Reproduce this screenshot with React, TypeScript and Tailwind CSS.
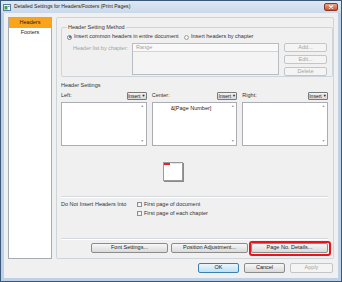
import React from "react";

type BtnProps = {
  children: React.ReactNode;
  className: string;
  disabled?: boolean;
  primary?: boolean;
};

const WinButton: React.FC<BtnProps> = ({ children, className, disabled = false, primary = false }) => {
  const tone = disabled
    ? "border-[#c3c6c9] bg-[#f4f4f4] text-[#a3a3a3]"
    : primary
    ? "border-[#3c7fb1] bg-gradient-to-b from-[#eaf6fd] to-[#bfe1f4] text-[#222]"
    : "border-[#8c8c8c] bg-gradient-to-b from-[#f7f7f7] to-[#dadada] text-[#222]";
  return (
    <div className={`flex items-center justify-center rounded-[2px] border text-[5.5px] leading-none ${tone} ${className}`}>
      {children}
    </div>
  );
};

const InsertButton: React.FC = () => (
  <div className="flex h-[8px] w-[20px] items-center justify-center gap-[1px] rounded-[1px] border border-[#7a7a7a] bg-gradient-to-b from-[#f4f4f4] to-[#d9d9d9] text-[5px] leading-none text-[#222]">
    <span>Insert</span>
    <span className="text-[4px]">▼</span>
  </div>
);

const TextBox: React.FC<{ text?: string }> = ({ text }) => (
  <div className="flex h-[44px] border border-[#abadb3] bg-white">
    <div className="flex flex-1 justify-center pt-[1px] text-[5.5px] leading-[8px] text-[#222]">{text}</div>
    <div className="flex w-[7px] flex-col items-center justify-between py-[1px] text-[3.5px] leading-[5px] text-[#9a9a9a]">
      <span>▲</span>
      <span>▼</span>
    </div>
  </div>
);

const Column: React.FC<{ label: string; text?: string }> = ({ label, text }) => (
  <div className="flex flex-col">
    <div className="flex h-[8px] items-center justify-between">
      <span className="text-[5.5px] leading-none">{label}</span>
      <InsertButton />
    </div>
    <div className="mt-[2px]">
      <TextBox text={text} />
    </div>
  </div>
);

const CheckRow: React.FC<{ label: string }> = ({ label }) => (
  <div className="flex h-[9px] items-center gap-[2px]">
    <div className="h-[5px] w-[5px] border border-[#8f8f8f] bg-gradient-to-br from-[#e6e6e6] to-white" />
    <span className="text-[5.5px] leading-none">{label}</span>
  </div>
);

const App: React.FC = () => {
  return (
    <div className="h-[282px] w-[342px] overflow-hidden bg-[#f0f0f0] font-['Liberation_Sans',Arial,sans-serif] text-[#333]">
      <div className="flex h-full w-full flex-col border border-[#3b5878] bg-[#bcd1e8]">
        {/* title bar */}
        <div className="flex h-[12px] shrink-0 items-center bg-gradient-to-b from-[#dfe8f3] to-[#cad9ea]">
          <svg className="ml-[2px]" width="8" height="7" viewBox="0 0 8 7">
            <rect x="0.5" y="0.5" width="7" height="6" fill="#f4f7fb" stroke="#5a7aa0" />
            <rect x="1.5" y="2" width="3" height="3.5" fill="#3fa34d" />
            <rect x="5" y="2" width="1.5" height="1" fill="#6d8fbf" />
          </svg>
          <span className="ml-[3px] text-[5.1px] leading-none text-[#1b1b1b]">
            Detailed Settings for Headers/Footers (Print Pages)
          </span>
          <div className="ml-auto mr-[3px] flex h-[8px] w-[14px] items-center justify-center rounded-[2px] border border-[#8a3a22] bg-gradient-to-b from-[#eba68c] to-[#c9552f]">
            <svg width="6" height="4" viewBox="0 0 6 4">
              <path d="M1 0.5 L5 3.5 M5 0.5 L1 3.5" stroke="#fff" strokeWidth="1.2" />
            </svg>
          </div>
        </div>

        {/* client area */}
        <div className="mx-[3px] flex h-[265px] flex-col bg-[#f0f0f0] px-[4px] pt-[4px]">
          <div className="flex h-[242px] gap-[4px]">
            {/* left list */}
            <div className="flex w-[44px] flex-col border border-[#a5acb5] bg-white text-[5.5px] leading-none">
              <div className="flex h-[10px] items-center justify-center bg-[#fba31b] text-[#222]">Headers</div>
              <div className="flex h-[10px] items-center justify-center text-[#222]">Footers</div>
            </div>

            {/* right panel */}
            <div className="flex w-[278px] flex-col rounded-[2px] border border-[#cdd5dc] pl-[4px] pr-[5px] pt-[5px]">
              <fieldset className="rounded-[2px] border border-[#cdd5dc] px-[5px]">
                <legend className="px-[1px] text-[5.5px] leading-[8px]">Header Setting Method</legend>
                <div className="mt-[2px] flex h-[8px] items-center text-[5.5px] leading-none">
                  <div className="flex w-[117px] items-center gap-[2px]">
                    <div className="flex h-[5px] w-[5px] items-center justify-center rounded-full border border-[#7a7a7a] bg-white">
                      <div className="h-[2px] w-[2px] rounded-full bg-[#2a5d9f]" />
                    </div>
                    <span>Insert common headers in entire document</span>
                  </div>
                  <div className="flex items-center gap-[2px]">
                    <div className="h-[5px] w-[5px] rounded-full border border-[#a0a0a0] bg-[#f4f4f4]" />
                    <span>Insert headers by chapter</span>
                  </div>
                </div>
                <div className="mt-[2px] flex h-[33px]">
                  <div className="w-[65px] pl-[6px] pt-[2px] text-[5.5px] leading-[6px] text-[#a3a3a3]">
                    Header list by chapter:
                  </div>
                  <div className="flex h-[32px] w-[147px] flex-col border border-[#b9bcc0] bg-[#f4f4f4]">
                    <div className="flex h-[8px] items-center border-b border-[#d2d4d6] bg-[#f9f9f9] pl-[3px] text-[5.5px] leading-none text-[#a3a3a3]">
                      Range
                    </div>
                  </div>
                  <div className="ml-[5px] flex w-[43px] flex-col gap-[3px]">
                    <WinButton className="h-[9px] w-full" disabled>Add...</WinButton>
                    <WinButton className="h-[9px] w-full" disabled>Edit...</WinButton>
                    <WinButton className="h-[9px] w-full" disabled>Delete</WinButton>
                  </div>
                </div>
              </fieldset>

              <div className="mt-[4px] h-[8px] text-[5.5px] leading-[8px]">Header Settings</div>

              <div className="mt-[3px] grid grid-cols-3 gap-[5px]">
                <Column label="Left:" />
                <Column label="Center:" text="&[Page Number]" />
                <Column label="Right:" />
              </div>

              {/* page preview */}
              <div className="ml-[102px] mt-[16px] flex h-[19px] w-[20px] flex-col border border-[#9a9a9a] bg-white shadow-[1px_1px_0_#8a8a8a]">
                <div className="flex h-[2px]">
                  <div className="h-[1.5px] w-[6px] bg-[#ee1c24]" />
                  <div className="ml-[1px] h-[1px] w-[10px] bg-[#e4e4e4]" />
                </div>
              </div>

              <div className="mt-[15px] border-t border-[#d5d9dd] shadow-[0_1px_0_#ffffff]" />

              <div className="mt-[3px] flex">
                <div className="flex h-[9px] w-[76px] items-center text-[5.5px] leading-none">
                  Do Not Insert Headers Into
                </div>
                <div className="flex flex-col">
                  <CheckRow label="First page of document" />
                  <CheckRow label="First page of each chapter" />
                </div>
              </div>

              <div className="mt-[20px] border-t border-[#d5d9dd] shadow-[0_1px_0_#ffffff]" />

              <div className="mt-[4px] flex justify-end gap-[3px]">
                <WinButton className="h-[10px] w-[77px]">Font Settings...</WinButton>
                <WinButton className="h-[10px] w-[77px]">Position Adjustment...</WinButton>
                <div className="relative">
                  <WinButton className="h-[10px] w-[77px]">Page No. Details...</WinButton>
                  <div className="absolute bottom-[-3px] left-[-2px] right-[-3px] top-[-2px] rounded-[3px] border-2 border-[#e8141a]" />
                </div>
              </div>
            </div>
          </div>

          <div className="mr-[1px] mt-[4px] flex justify-end gap-[5px]">
            <WinButton className="h-[10px] w-[41px]" primary>OK</WinButton>
            <WinButton className="h-[10px] w-[41px]">Cancel</WinButton>
            <WinButton className="h-[10px] w-[43px]" disabled>Apply</WinButton>
          </div>
        </div>
      </div>
    </div>
  );
};

export default App;
